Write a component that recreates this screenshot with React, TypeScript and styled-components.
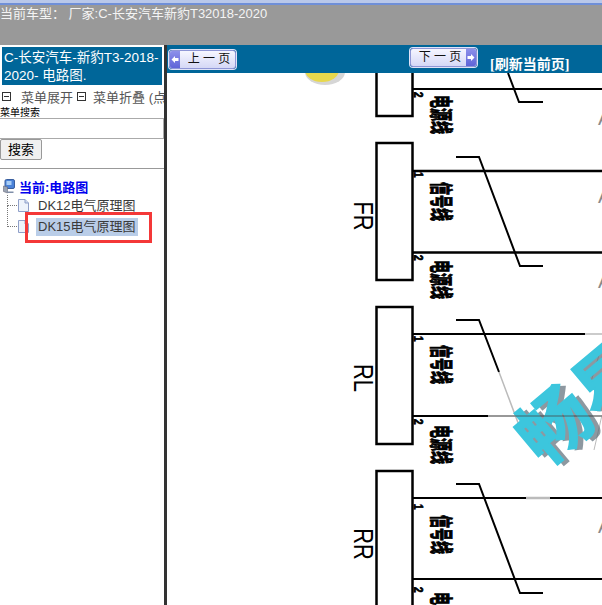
import * as React from 'react';

import styled, { createGlobalStyle } from 'styled-components';

const panelBlue = '#006699';
const fontStack = '"Liberation Sans", "Noto Sans CJK SC", sans-serif';

const GlobalStyle = createGlobalStyle`
	html, body {
		margin: 0;
		padding: 0;
		background: #fff;
		overflow: hidden;
	}
	* {
		box-sizing: border-box;
	}
`;

const Page = styled.div`
	width: 602px;
	height: 605px;
	display: flex;
	flex-direction: column;
	overflow: hidden;
	font-family: ${fontStack};
`;
const TopStrip = styled.div`
	height: 6px;
	background: linear-gradient(#b9c8ea 0 3px, #6f8fd8 3px 5px, #999 5px);
`;
const Header = styled.div`
	height: 39px;
	flex: none;
	background: #999;
	color: #f4f4f4;
	font-size: 13px;
	line-height: 15px;
	white-space: nowrap;
`;
const Body = styled.div`
	flex: 1;
	display: flex;
	min-height: 0;
`;
const Sidebar = styled.div`
	width: 164px;
	flex: none;
	overflow: hidden;
	background: #fff;
	padding-top: 2px;
`;
const Divider = styled.div`
	width: 3px;
	flex: none;
	background: #333;
`;
const SideTitle = styled.div`
	margin: 0 2px;
	width: 160px;
	height: 38px;
	padding: 2px 0 0 2px;
	background: ${panelBlue};
	color: #fff;
	font-size: 13.5px;
	line-height: 18px;
	white-space: nowrap;
`;
const MenuRow = styled.div`
	display: flex;
	align-items: center;
	height: 18px;
	margin-top: 2px;
	padding-left: 2px;
	color: #555;
	font-size: 13px;
	white-space: nowrap;
`;
const MenuIcon = styled.span`
	width: 9px;
	height: 9px;
	flex: none;
	margin-right: 10px;
	border: 1px solid #333;
	background: linear-gradient(#333, #333) center / 5px 1px no-repeat;
	&:not(:first-child) {
		margin-left: 4px;
		margin-right: 7px;
	}
`;
const SearchLabel = styled.div`
	height: 12px;
	margin-top: 2px;
	color: #000;
	font-size: 10px;
	line-height: 12px;
`;
const SearchInput = styled.div`
	height: 21px;
	width: 164px;
	margin-top: -1px;
	border: 1px solid #aaa;
	border-left: none;
	background: #fff;
`;
const SearchButton = styled.button`
	display: block;
	width: 42px;
	height: 21px;
	padding: 0;
	border: 1px solid #999;
	border-radius: 2px;
	background: #f0f0f0;
	color: #000;
	font-family: ${fontStack};
	font-size: 13px;
	line-height: 18px;
`;
const Rule = styled.div`
	height: 1px;
	margin-top: 8px;
	background: #999;
`;
const Tree = styled.div`
	position: relative;
	padding: 8px 0 0 3px;
`;
const TreeRoot = styled.div`
	display: flex;
	align-items: center;
	gap: 4px;
	height: 18px;
	color: #0000ee;
	font-size: 13px;
	font-weight: 700;
`;
const TreeItem = styled.div`
	display: flex;
	align-items: center;
	height: 21px;
	padding-left: 4px;
`;
const Dots = styled.span<{ tall?: boolean }>`
	align-self: flex-start;
	width: 10px;
	height: ${(props) => (props.tall ? '21px' : '11px')};
	flex: none;
	margin-top: ${(props) => (props.tall ? '-10px' : '0')};
	border-left: 1px dotted #777;
	border-bottom: 1px dotted #777;
`;
const ItemLabel = styled.span<{ selected?: boolean }>`
	margin-left: 6px;
	padding: 0 2px;
	height: 18px;
	color: #3a3a3a;
	font-size: 13px;
	line-height: 18px;
	white-space: nowrap;
	background: ${(props) => (props.selected ? '#b9cde8' : 'transparent')};
`;
const RedMark = styled.div`
	position: absolute;
	left: 25px;
	top: 43px;
	width: 127px;
	height: 31px;
	border: 3px solid #f43838;
`;
const Main = styled.div`
	flex: 1;
	min-width: 0;
	display: flex;
	flex-direction: column;
`;
const Toolbar = styled.div`
	height: 28px;
	flex: none;
	display: flex;
	align-items: flex-start;
	padding: 5px 0 0 2px;
	background: ${panelBlue};
`;
const PageButton = styled.div<{ next?: boolean }>`
	display: flex;
	flex-direction: ${(props) => (props.next ? 'row-reverse' : 'row')};
	align-items: stretch;
	width: 67px;
	height: 19px;
	margin-top: ${(props) => (props.next ? '-2px' : '0')};
	margin-left: ${(props) => (props.next ? '174px' : '0')};
	border: 1px solid #8f96d6;
	border-radius: 3px;
	background: linear-gradient(#f6f6ff, #d5d8f6);
	box-shadow: 0 0 0 1px #dfe3f8;
	color: #111;
	font-size: 12px;
	line-height: 17px;
	overflow: hidden;
`;
const PageArrow = styled.span`
	width: 10px;
	flex: none;
	display: flex;
	align-items: center;
	justify-content: center;
	background: linear-gradient(#8d90ea, #5f64d8);
`;
const PageText = styled.span`
	flex: 1;
	padding-left: 3px;
	text-align: center;
`;
const Refresh = styled.span`
	margin: 7px 0 0 13px;
	color: #fff;
	font-family: "Liberation Serif", "Noto Sans CJK SC", serif;
	font-size: 14px;
	font-weight: 700;
	line-height: 15px;
	white-space: nowrap;
`;
const Diagram = styled.svg`
	flex: 1;
	display: block;
	width: 435px;
	min-height: 0;
	background: #fff;
`;

function ArrowIcon(props: { next?: boolean }) {
	return (
		<svg width="8" height="9" viewBox="0 0 8 9">
			<path
				d="M0.5 4.5L4 1v2h3.5v3H4v2z"
				fill="#fff"
				transform={props.next ? 'rotate(180 4 4.5)' : undefined}
			/>
		</svg>
	);
}

function PageIcon() {
	return (
		<svg width="13" height="15" viewBox="0 0 13 15" style={{ flex: 'none' }}>
			<path d="M1.5 1.5h6.5l3.5 3.5v8.5h-10z" fill="#eef3fb" stroke="#8f9fc8" />
			<path d="M8 1.5v3.5h3.5" fill="#cfdaf0" stroke="#8f9fc8" />
		</svg>
	);
}

function ComputerIcon() {
	return (
		<svg width="12" height="15" viewBox="0 0 12 15" style={{ flex: 'none' }}>
			<rect x="2" y="0.5" width="9.5" height="9" rx="1.5" fill="#4a82d8" stroke="#3a5f9f" />
			<rect x="3.5" y="2" width="5" height="4" fill="#a8cdf5" />
			<path d="M0.5 7l4 1v6l-4-1.5z" fill="#9aa4b4" stroke="#667" strokeWidth="0.6" />
			<path d="M4.5 12.5h6v1.5h-6z" fill="#7f8ea8" />
		</svg>
	);
}

function Connector(props: { y: number; name?: string; nameY?: number }) {
	const { y, name, nameY } = props;
	return (
		<g>
			<rect x={376.5} y={y} width={36} height={137} fill="#fff" stroke="#000" strokeWidth={2.5} />
			{name && (
				<text
					transform={`translate(354 ${nameY}) rotate(90) scale(0.78 1)`}
					fontSize={28}
					textAnchor="middle"
					fontFamily={fontStack}
				>
					{name}
				</text>
			)}
		</g>
	);
}

function RotatedLabel(props: { x: number; y: number; size: number; stretch: number; text: string }) {
	return (
		<text
			transform={`translate(${props.x} ${props.y}) rotate(90) scale(1 ${props.stretch})`}
			fontSize={props.size}
			fontWeight={700}
			fontFamily={fontStack}
			stroke="#000"
			strokeWidth={0.6}
		>
			{props.text}
		</text>
	);
}

// y values are where each rotated label starts, read off the reference
function WireLabels(props: { one: number; two: number; signal: number; power: number }) {
	return (
		<g>
			<RotatedLabel x={414} y={props.one} size={10} stretch={1.3} text="1" />
			<RotatedLabel x={414} y={props.two} size={10} stretch={1.3} text="2" />
			<RotatedLabel x={433} y={props.signal} size={13} stretch={1.75} text="信号线" />
			<RotatedLabel x={433} y={props.power} size={13} stretch={1.75} text="电源线" />
		</g>
	);
}

function WiringDiagram() {
	return (
		<Diagram viewBox="167 73 435 532">
			<ellipse cx={325} cy={72} rx={20} ry={13} fill="#bbb" opacity={0.6} />
			<ellipse cx={322} cy={70} rx={17} ry={12} fill="#e8d84c" />

			<Connector y={-21} />
			<Connector y={143} name="FR" nameY={216} />
			<Connector y={307} name="RL" nameY={378} />
			<Connector y={471} name="RR" nameY={544} />

			<g stroke="#000" strokeWidth={2} fill="none">
				<path d="M412 89H602M508 73L519 102H543" />
				<path d="M412 171H602M412 252.5H602" strokeWidth={2.5} />
				<path d="M456 157H479L520 266H543" />
				<path d="M412 334H585M412 416H488" />
				<path d="M456 320H479L499 372" />
				<path d="M412 498H526M550 498H602M412 579H602" />
				<path d="M456 484H479L520 593H543" />
			</g>
			<g stroke="#bbb" strokeWidth={1.5} fill="none">
				<path d="M585 334H602M488 416H602M499 372L520 428" />
				<path d="M526 498H550" strokeWidth={2.5} />
				<path d="M602 345L590 385M602 415L594 450" strokeWidth={1} />
			</g>

			<RotatedLabel x={414} y={92} size={10} stretch={1.3} text="2" />
			<RotatedLabel x={433} y={95} size={13} stretch={1.75} text="电源线" />
			<WireLabels one={172} two={255} signal={182} power={260} />
			<WireLabels one={336} two={419} signal={345} power={425} />
			<WireLabels one={504} two={587} signal={515} power={592} />

			<g fontFamily={fontStack} fontSize={20} fill="#8a8a8a">
				<text x={598} y={125}>A</text>
				<text x={598} y={203}>A</text>
				<text x={598} y={288}>A</text>
				<text x={598} y={366} fill="#ccc">A</text>
				<text x={598} y={533}>A</text>
			</g>

			<g transform="translate(623 373) rotate(-40)" fontFamily={fontStack} fontSize={72} fontWeight={700}>
				<text x={-46} y={27} fill="#5d6d78" opacity={0.7} textAnchor="middle">畅易</text>
				<text x={-50} y={22} fill="#3cc6dd" stroke="#3cc6dd" strokeWidth={1.5} textAnchor="middle">畅易</text>
			</g>
			<path d="M488 416H602" stroke="#444" strokeWidth={1.5} opacity={0.5} />
		</Diagram>
	);
}

export default function App() {
	return (
		<Page>
			<GlobalStyle />
			<TopStrip />
			<Header>当前车型： 厂家:C-长安汽车新豹T32018-2020</Header>
			<Body>
				<Sidebar>
					<SideTitle>
						C-长安汽车-新豹T3-2018-
						<br />
						2020- 电路图.
					</SideTitle>
					<MenuRow>
						<MenuIcon />
						菜单展开
						<MenuIcon />
						菜单折叠 (点击
					</MenuRow>
					<SearchLabel>菜单搜索</SearchLabel>
					<SearchInput />
					<SearchButton>搜索</SearchButton>
					<Rule />
					<Tree>
						<TreeRoot>
							<ComputerIcon />
							当前:电路图
						</TreeRoot>
						<TreeItem>
							<Dots />
							<PageIcon />
							<ItemLabel>DK12电气原理图</ItemLabel>
						</TreeItem>
						<TreeItem>
							<Dots tall />
							<PageIcon />
							<ItemLabel selected>DK15电气原理图</ItemLabel>
						</TreeItem>
						<RedMark />
					</Tree>
				</Sidebar>
				<Divider />
				<Main>
					<Toolbar>
						<PageButton>
							<PageArrow>
								<ArrowIcon />
							</PageArrow>
							<PageText>上 一 页</PageText>
						</PageButton>
						<PageButton next>
							<PageArrow>
								<ArrowIcon next />
							</PageArrow>
							<PageText>下 一 页</PageText>
						</PageButton>
						<Refresh>[刷新当前页]</Refresh>
					</Toolbar>
					<WiringDiagram />
				</Main>
			</Body>
		</Page>
	);
}
